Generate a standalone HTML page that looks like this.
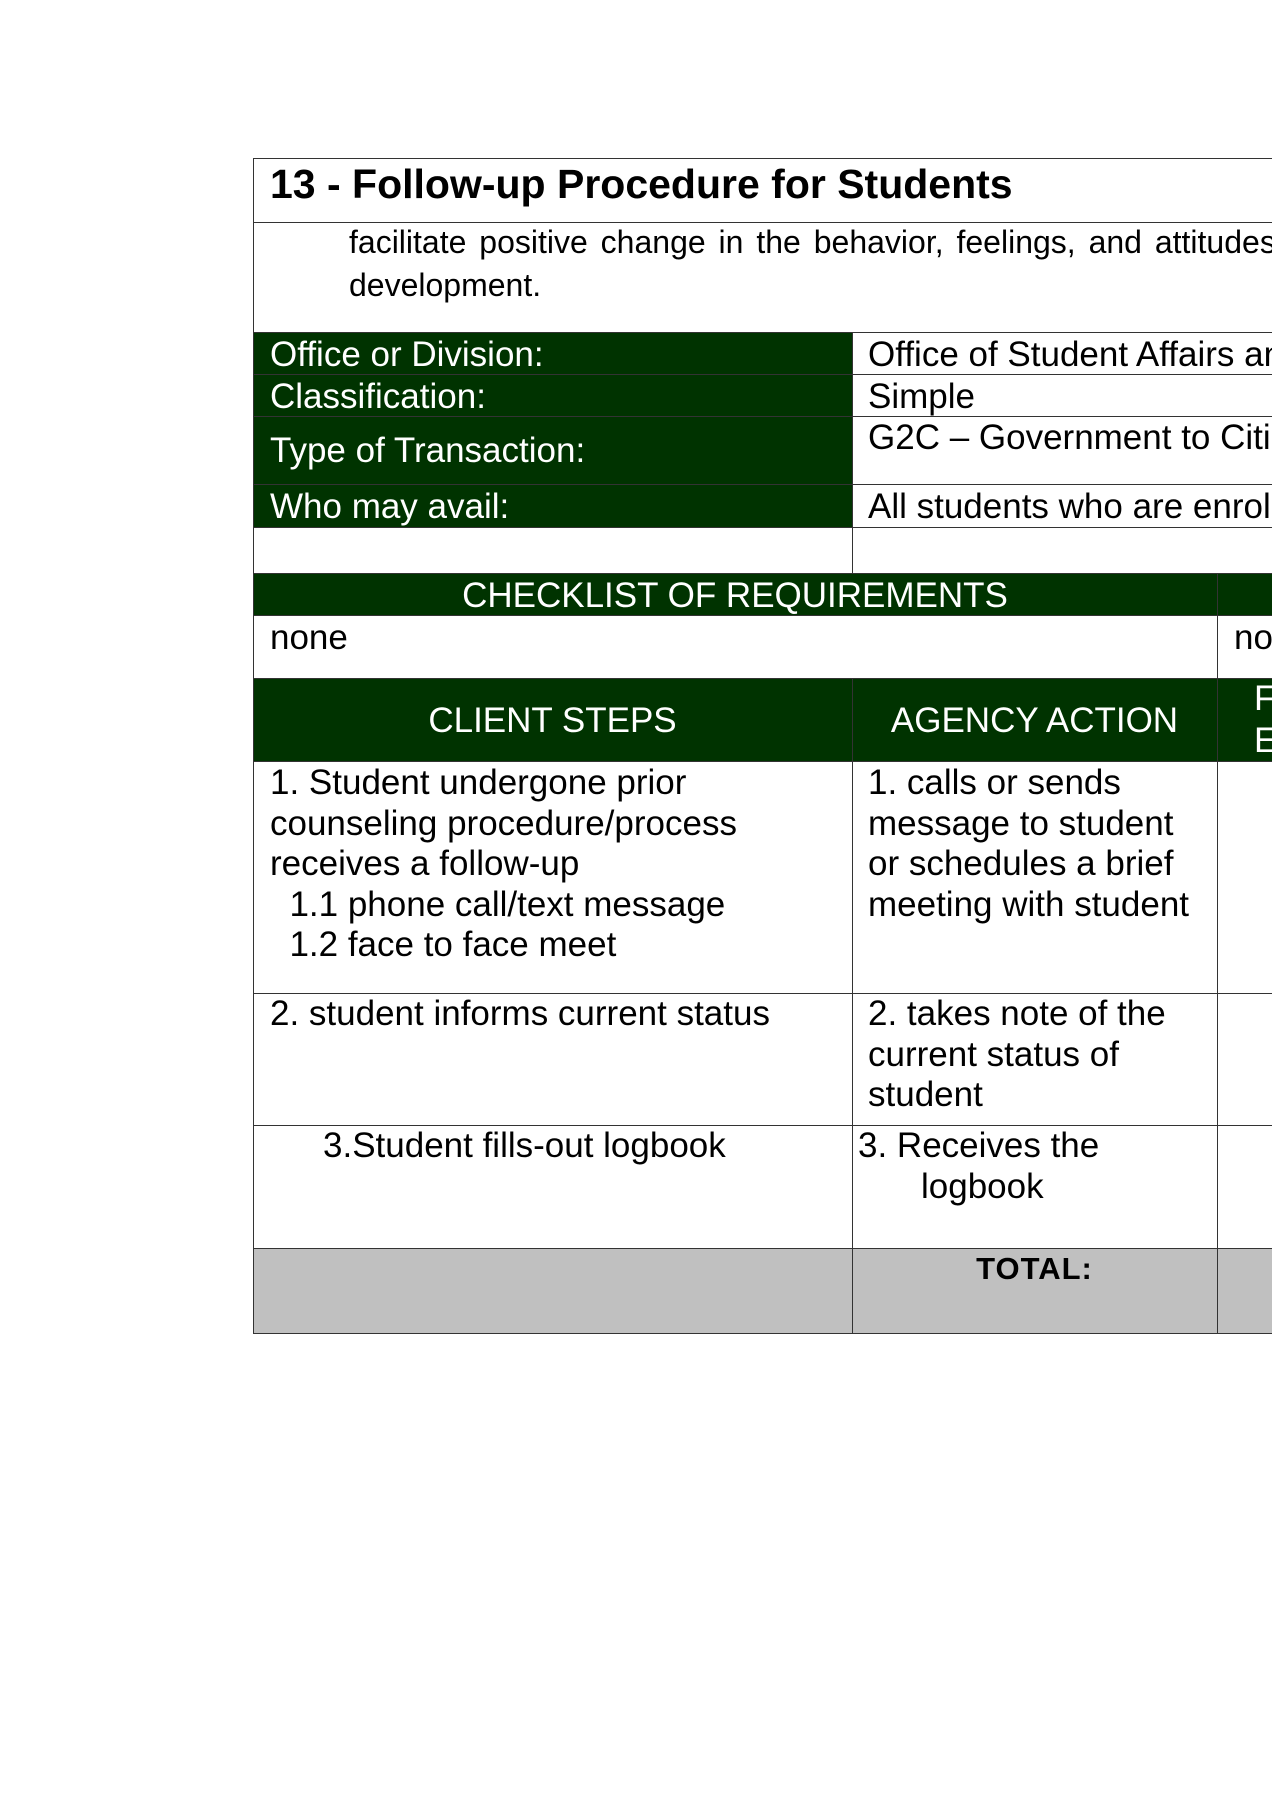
<!DOCTYPE html>
<html><head><meta charset="utf-8"><style>
html,body{margin:0;width:1272px;height:1800px;overflow:hidden}
body{background:#fff;font-family:"Liberation Sans",Arial,sans-serif;color:#000}
#c{position:relative;width:1272px;height:1800px;overflow:hidden}
.b{position:absolute;box-sizing:border-box}
.g{background:#003300}
.gr{background:#c0c0c0}
.h{position:absolute;height:1px;background:#333}
.v{position:absolute;width:1px;background:#333}
.t{position:absolute;font-size:35px;line-height:41px;white-space:nowrap;overflow:hidden}
.w{color:#fff}
</style></head><body><div id="c">
<div class="b g" style="left:253px;top:332px;width:599px;height:195px"></div>
<div class="b g" style="left:253px;top:573px;width:1019px;height:42px"></div>
<div class="b g" style="left:253px;top:678px;width:1019px;height:83px"></div>
<div class="b gr" style="left:253px;top:1248px;width:1019px;height:85px"></div>
<div class="h" style="left:253px;top:158px;width:1019px"></div>
<div class="h" style="left:253px;top:222px;width:1019px"></div>
<div class="h" style="left:253px;top:332px;width:1019px"></div>
<div class="h" style="left:253px;top:374px;width:1019px"></div>
<div class="h" style="left:253px;top:416px;width:1019px"></div>
<div class="h" style="left:253px;top:484px;width:1019px"></div>
<div class="h" style="left:253px;top:527px;width:1019px"></div>
<div class="h" style="left:253px;top:573px;width:1019px"></div>
<div class="h" style="left:253px;top:615px;width:1019px"></div>
<div class="h" style="left:253px;top:678px;width:1019px"></div>
<div class="h" style="left:253px;top:761px;width:1019px"></div>
<div class="h" style="left:253px;top:993px;width:1019px"></div>
<div class="h" style="left:253px;top:1125px;width:1019px"></div>
<div class="h" style="left:253px;top:1248px;width:1019px"></div>
<div class="h" style="left:253px;top:1333px;width:1019px"></div>
<div class="v" style="left:253px;top:158px;height:1175px"></div>
<div class="v" style="left:852px;top:332px;height:241px"></div>
<div class="v" style="left:1217px;top:573px;height:105px"></div>
<div class="v" style="left:852px;top:678px;height:655px"></div>
<div class="v" style="left:1217px;top:678px;height:655px"></div>
<div class="t" style="left:270px;top:160px;font-size:41px;line-height:48px;font-weight:bold">13 - Follow-up Procedure for Students</div>
<div class="t" style="left:349px;top:221px;width:923px;font-size:32px;line-height:43px;word-spacing:4px">facilitate positive change in the behavior, feelings, and attitudes<br>development.</div>
<div class="t w" style="left:270px;top:334px">Office or Division:</div>
<div class="t w" style="left:270px;top:376px">Classification:</div>
<div class="t w" style="left:270px;top:430px">Type of Transaction:</div>
<div class="t w" style="left:270px;top:486px">Who may avail:</div>
<div class="t" style="left:868px;top:334px;width:404px">Office of Student Affairs and</div>
<div class="t" style="left:868px;top:376px">Simple</div>
<div class="t" style="left:868px;top:417px;width:404px">G2C – Government to Citizen</div>
<div class="t" style="left:868px;top:486px;width:404px">All students who are enrolled</div>
<div class="t w" style="left:253px;width:964px;text-align:center;top:575px">CHECKLIST OF REQUIREMENTS</div>
<div class="t" style="left:270px;top:617px">none</div>
<div class="t" style="left:1234px;top:617px;width:38px">none</div>
<div class="t w" style="left:253px;width:599px;text-align:center;top:700px">CLIENT STEPS</div>
<div class="t w" style="left:852px;width:365px;text-align:center;top:700px">AGENCY ACTION</div>
<div class="t w" style="left:1254px;top:678px;width:18px;line-height:42px">F<br>E</div>
<div class="t" style="left:270px;top:763px;line-height:40.5px">1. Student undergone prior<br>counseling procedure/process<br>receives a follow-up<br>&nbsp;&nbsp;1.1 phone call/text message<br>&nbsp;&nbsp;1.2 face to face meet</div>
<div class="t" style="left:868px;top:763px;line-height:40.5px">1. calls or sends<br>message to student<br>or schedules a brief<br>meeting with student</div>
<div class="t" style="left:270px;top:994px;line-height:40.5px">2. student informs current status</div>
<div class="t" style="left:868px;top:994px;line-height:40.5px">2. takes note of the<br>current status of<br>student</div>
<div class="t" style="left:323px;top:1126px;line-height:40.5px">3.Student fills-out logbook</div>
<div class="t" style="left:858px;top:1126px;line-height:40.5px">3. Receives the<br><span style="padding-left:63px">logbook</span></div>
<div class="t" style="left:852px;width:365px;text-align:center;top:1248px;font-weight:bold;font-size:31px;letter-spacing:1px">TOTAL:</div>
</div></body></html>
